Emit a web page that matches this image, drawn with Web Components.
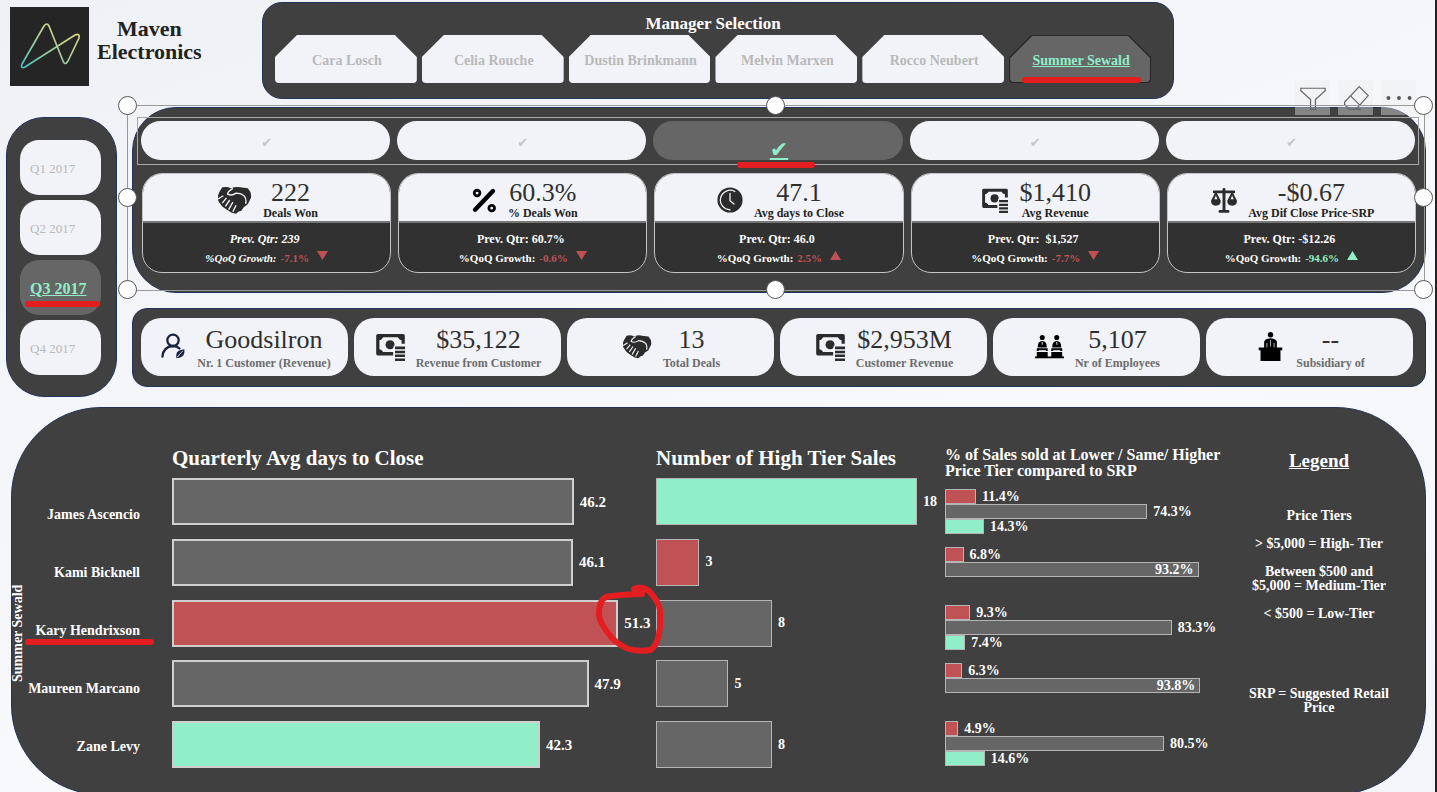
<!DOCTYPE html>
<html lang="en">
<head>
<meta charset="utf-8">
<meta name="viewport" content="width=device-width, initial-scale=1">
<title>Maven Electronics – Manager dashboard</title>
<style>
  :root {
    --page: #f1f3f8; --panel: #404040; --edge: #25325c; --dark: #313131; --grey: #666666;
    --mint: #90eec8; --rose: #c05256; --pen: #e41e20; --mute: #b9b9b9;
  }
  * { box-sizing: border-box; }
  html { scrollbar-width: none; background: var(--page); }
  body {
    margin: 0; min-height: 100vh; border-right: 2px solid #222;
    background: linear-gradient(160deg, #eff1f6, #f8f9fc 60%, #f4f5fb);
    font-family: Georgia, "Liberation Serif", serif; font-size: 14px; line-height: 18px; color: #252525;
  }
  .top { display: grid; grid-template-columns: 262px 1fr 261px; height: 107px; padding-top: 2px; align-items: start; }
  .mid { display: grid; grid-template-columns: 111px 1fr; gap: 15px; padding: 0 9px 10px 6px; }
  .mid > quarter-slicer { margin-top: 10px; }
  .stack { display: grid; gap: 15px; align-content: start; }
</style>
</head>
<body>
  <header class="top">
    <brand-mark>Maven<br>Electronics</brand-mark>
    <manager-tabs active="Summer Sewald">Manager Selection</manager-tabs>
  </header>
  <main>
    <div class="mid">
      <quarter-slicer active="Q3 2017"></quarter-slicer>
      <div class="stack">
        <kpi-panel>
          <kpi-card icon="hands" value="222" prev="239" growth="-7.1%" trend="down" slanted>Deals Won</kpi-card>
          <kpi-card icon="percent" value="60.3%" prev="60.7%" growth="-0.6%" trend="down">% Deals Won</kpi-card>
          <kpi-card icon="clock" value="47.1" prev="46.0" growth="2.5%" trend="up">Avg days to Close</kpi-card>
          <kpi-card icon="money" value="$1,410" prev="&nbsp;$1,527" growth="-7.7%" trend="down">Avg Revenue</kpi-card>
          <kpi-card icon="scales" value="-$0.67" prev="-$12.26" growth="-94.6%" trend="up" good>Avg Dif Close Price-SRP</kpi-card>
        </kpi-panel>
        <customer-panel>
          <customer-card icon="person" value="Goodsilron">Nr. 1 Customer (Revenue)</customer-card>
          <customer-card icon="money" value="$35,122">Revenue from Customer</customer-card>
          <customer-card icon="hands" value="13">Total Deals</customer-card>
          <customer-card icon="money" value="$2,953M">Customer Revenue</customer-card>
          <customer-card icon="staff" value="5,107">Nr of Employees</customer-card>
          <customer-card icon="podium" value="--">Subsidiary of</customer-card>
        </customer-panel>
      </div>
    </div>
    <team-panel>
      <agent-names slot="names" manager="Summer Sewald" marked="Kary Hendrixson"></agent-names>
      <bar-chart slot="days" id="days">Quarterly Avg days to Close</bar-chart>
      <bar-chart slot="sales" id="sales">Number of High Tier Sales</bar-chart>
      <tier-chart slot="tiers">% of Sales sold at Lower / Same/ Higher<br>Price Tier compared to SRP</tier-chart>
      <tier-legend slot="legend"></tier-legend>
    </team-panel>
  </main>

<script>
const base = `
  *, *::before, *::after { box-sizing: border-box; }
  :host { display: block; }
  button { font: inherit; color: inherit; margin: 0; padding: 0; border: 0; background: none; cursor: pointer; position: relative; }
  .pen { position: absolute; height: 6px; border-radius: 3px; background: var(--pen); }
`;

function define(name, render) {
  customElements.define(name, class extends HTMLElement {
    constructor() { super(); this.attachShadow({ mode: 'open' }); }
    connectedCallback() {
      const t = document.createElement('template');
      t.innerHTML = render(this);
      this.shadowRoot.replaceChildren(t.content.cloneNode(true));
    }
  });
}
const get = (el, n) => el.getAttribute(n) || '';

/* ---------- icons ---------- */
const icons = {
  hands: `<path fill="#2b2b2b" d="M1 9 4 4q5-1 8 1 5-2 9-1l7 1q4 4 3 9l-3 6-4 3-2 3-3 1-2 2-4-1-5-3-4-3-3-4-2-4Q0 12 1 9z"/>
    <path fill="none" stroke="#f1f3f8" stroke-width="1.300" d="M14 5Q9 8 9 10.500q4 2 8-1 5 0 8 3 2 3 1 7M0 15l5-3M8 14l-4 5M11 16l-4 6M14 18l-4 7M17 21l-3 6"/>`,
  percent: `<g fill="none" stroke="#000"><path stroke-width="5.500" stroke-linecap="round" d="M27 5 5 28"/><circle cx="7.500" cy="7.500" r="3.500" stroke-width="3.400"/><circle cx="25.500" cy="26" r="3.500" stroke-width="3.400"/></g>`,
  clock: `<circle cx="16" cy="16" r="15.500" fill="#2b2b2b"/><path fill="none" stroke="#f1f3f8" stroke-width="1.600" stroke-linecap="round" d="M22 5.500A12 12 0 1 0 16 28M16 8v9l5 4"/>`,
  money: `<path fill="none" stroke="#2b2b2b" stroke-width="3.600" stroke-linejoin="round" d="M19 24H2V4h28v9"/>
    <path fill="#2b2b2b" d="M3 5h5q-1 4-5 4zM29 5h-5q1 4 5 4zM3 23h5q-1-4-5-4z"/><circle cx="15.500" cy="14" r="5" fill="#2b2b2b"/>
    <path fill="#f1f3f8" d="M19.500 15h12.500V32H19.500z"/><path stroke="#2b2b2b" stroke-width="2.800" d="M21 17.500h11M21 22h11M21 26.300h11M21 30.600h11"/>`,
  scales: `<path fill="none" stroke="#2b2b2b" stroke-width="3.600" stroke-linecap="round" d="M16 3v26M4 6h24M11 30h10"/>
    <path fill="#2b2b2b" d="M5.500 6h1L12 17q0 6-6 6t-6-6zM25.500 6h1L32 17q0 6-6 6t-6-6z"/>
    <path fill="#f1f3f8" d="M6 10.500l2 4.500h-4zM26 10.500l2 4.500h-4z"/>`,
  person: `<g fill="none" stroke="#1b2340" stroke-width="2.800"><circle cx="16" cy="9" r="7"/><path stroke-linecap="round" d="M3 29q1-12 13-13 5 0 8 3"/></g>
    <path fill="#1b2340" d="M20 27q0-6 10-7 1 8-5 10l-5 1z"/><path stroke="#f1f3f8" d="m21 30 7-8"/>`,
  staff: `<g><circle cx="8" cy="6" r="2.800"/><path d="M3 17q0-7 5-7t5 7zM2 18h12v3H2zM2 22h12v6H2z"/></g>
    <g transform="translate(16)"><circle cx="8" cy="6" r="2.800"/><path d="M3 17q0-7 5-7t5 7zM2 18h12v3H2zM2 22h12v6H2z"/></g><path d="M0 27h32v2H0z"/>
    <path stroke="#f1f3f8" stroke-width="1" d="M4 20.500h8M20 20.500h8M8 11v3M24 11v3"/>`,
  podium: `<circle cx="16" cy="3" r="3"/><path d="M9 17V11q0-3 7-4 7 1 7 4v6zM3 17h26v3H3zM5 20h22v12H5z"/><path stroke="#f1f3f8" stroke-width=".8" d="M16 9v7M12 12v5M20 12v5"/>`,
  funnel: `<path fill="none" stroke="#666" stroke-width="1.500" d="M1 4h30v3L19 18v12h-6V18L1 7z"/>`,
  eraser: `<path fill="none" stroke="#666" stroke-width="1.500" d="M20 2 31 13 16 30H8l-6-6V21zM9 13 21 25M8 30h14"/>`,
  dots: `<g fill="#555"><circle cx="3" cy="16" r="2.400"/><circle cx="16" cy="16" r="2.400"/><circle cx="29" cy="16" r="2.400"/></g>`
};
define('ui-icon', el => `<style>${base} :host { width: var(--size, 26px); height: var(--size, 26px); flex: none; } svg { display: block; width: 100%; height: 100%; }</style>
  <svg viewBox="0 0 32 32" aria-hidden="true">${icons[get(el, 'name')]}</svg>`);

/* ---------- header ---------- */
define('brand-mark', () => `<style>${base}
  :host { display: flex; gap: 8px; padding: 5px 0 0 10px; }
  svg { width: 79px; height: 79px; flex: none; }
  h1 { margin: 10px 0 0; font-size: 22px; line-height: 23px; text-align: center; color: #222; }
  </style>
  <svg viewBox="0 0 79 79" role="img" aria-label="Maven logo"><defs><linearGradient id="g" x1="0" y1="1" x2="1" y2="0"><stop stop-color="#45c3bd"/><stop offset=".6" stop-color="#b9cf93"/><stop offset="1" stop-color="#ecdf83"/></linearGradient></defs>
  <rect width="79" height="79" fill="#252525"/><path fill="none" stroke="url(#g)" stroke-width="1.700" stroke-linejoin="round" d="M12 57 34 19Q37 15 39 19L53 54Q55 59 58 54L69 31Q70 26 65 28L15 60Q10 62 12 57Z"/></svg>
  <h1><slot></slot></h1>`);

const managers = ['Cara Losch', 'Celia Rouche', 'Dustin Brinkmann', 'Melvin Marxen', 'Rocco Neubert', 'Summer Sewald'];
define('manager-tabs', el => `<style>${base}
  :host { height: 97px; padding: 12px 22px 0 12px; border: 1px solid var(--edge); border-radius: 20px; background: var(--panel); color: #fff; }
  h2 { margin: 0 0 2px; font-size: 17px; line-height: 18px; text-align: center; }
  nav { display: grid; grid-template-columns: repeat(6, 1fr); gap: 5px; }
  button { height: 48px; padding: 4px 0 0 2px; font-weight: bold; color: var(--mute); isolation: isolate; white-space: nowrap; }
  button::before, button.on::after { content: ""; position: absolute; inset: 0; z-index: -1; background: var(--page); border-radius: 0 0 4px 4px;
    clip-path: polygon(22px 0, calc(100% - 22px) 0, 100% 22px, 100% 100%, 0 100%, 0 22px); }
  button.on { color: var(--mint); text-decoration: underline; }
  button.on::before { background: #262626; }
  button.on::after { inset: 1px; background: var(--grey); }
  .pen { left: 13px; right: 10px; bottom: 0; }
  </style><h2><slot></slot></h2>
  <nav>${managers.map(m => m === get(el, 'active') ? `<button class="on" aria-pressed="true">${m}<span class="pen"></span></button>` : `<button>${m}</button>`).join('')}</nav>`);

/* ---------- quarter slicer ---------- */
define('quarter-slicer', el => `<style>${base}
  :host { height: 280px; padding: 22px 15px 0 13px; border: 1px solid var(--edge); border-radius: 38px; background: var(--panel); }
  nav { display: grid; gap: 5px; }
  button { height: 55px; padding: 2px 0 0 10px; border-radius: 19px; background: var(--page); color: var(--mute); font-size: 13px; text-align: left; }
  .on { background: var(--grey); color: var(--mint); font-size: 16px; font-weight: bold; text-decoration: underline; }
  .pen { left: 5px; right: 1px; bottom: 8px; }
  </style><nav>${['Q1 2017', 'Q2 2017', 'Q3 2017', 'Q4 2017'].map(q => q === get(el, 'active') ? `<button class="on" aria-pressed="true">${q}<span class="pen"></span></button>` : `<button>${q}</button>`).join('')}</nav>`);

/* ---------- KPI panel ---------- */
define('kpi-panel', () => `<style>${base}
  :host { position: relative; padding: 13px 10px 19px 8px; border: 1px solid var(--edge); border-radius: 44px; background: var(--panel); }
  .checks, .cards { display: grid; grid-template-columns: repeat(5, 1fr); gap: 7px; }
  .checks { position: relative; margin-bottom: 13px; }
  .outline { position: absolute; inset: -4px -4px -5px -4px; border: 1px solid #a8a8a8; pointer-events: none; }
  .checks button { height: 39px; border-radius: 20px; background: var(--page); color: #c8c8c8; font: 13px/20px "DejaVu Sans", sans-serif; padding: 4px 0 0 2px; }
  .checks .on { background: var(--grey); color: var(--mint); font-size: 22px; padding-top: 18px; text-decoration: underline; text-underline-offset: 1px; }
  .pen { left: 50%; width: 78px; margin-left: -41px; bottom: -8px; z-index: 1; }
  .cards { margin: 0 -1px 0 1px; }
  .frame { position: absolute; inset: -3px 0 1px -6px; border: 1px solid #999; pointer-events: none; }
  .frame i { position: absolute; width: 19px; height: 19px; margin: -10px; border: 1px solid #555; border-radius: 50%; background: #fff; }
  .tools { position: absolute; top: -28px; right: 9px; display: flex; gap: 8px; }
  .tools button { display: grid; place-items: center; width: 35px; height: 35px; background: rgba(238, 238, 238, .4); }
  </style>
  <div class="checks"><span class="outline"></span>
    <button aria-label="Deals Won">✔</button><button aria-label="% Deals Won">✔</button>
    <button class="on" aria-pressed="true" aria-label="Avg days to Close">✔<span class="pen"></span></button>
    <button aria-label="Avg Revenue">✔</button><button aria-label="Avg Dif Close Price-SRP">✔</button></div>
  <div class="cards"><slot></slot></div>
  <div class="tools"><button aria-label="Filters"><ui-icon name="funnel"></ui-icon></button><button aria-label="Clear selections"><ui-icon name="eraser"></ui-icon></button><button aria-label="More options"><ui-icon name="dots"></ui-icon></button></div>
  <div class="frame">${[[0,0],[50,0],[100,0],[0,50],[100,50],[0,100],[50,100],[100,100]].map(([x, y]) => `<i style="left:${x}%;top:${y}%"></i>`).join('')}</div>`);

const metric = `
  .head { display: flex; justify-content: center; align-items: center; gap: 11px; }
  .text { text-align: center; white-space: nowrap; }
  .value { font-size: 26px; line-height: 26px; color: #2f2f2f; }
  .label { font-size: 12px; line-height: 14px; font-weight: bold; }
`;
define('kpi-card', el => `<style>${base}${metric}
  :host { height: 100px; border: 1px solid #c4c4c4; border-radius: 20px; overflow: hidden; background: var(--dark); color: #fff; text-align: center; font-weight: bold; }
  .head { height: 49px; padding: 4px 0 0 3px; border-bottom: 2px solid #777; background: var(--page); color: #222; }
  .value { font-weight: normal; }
  :host([icon="hands"]) ui-icon { --size: 34px; }
  p { margin: 0; font-size: 12px; line-height: 18px; }
  .prev { padding: 7px 4px 0 0; }
  .growth { display: flex; justify-content: center; gap: 4px; font-size: 11px; line-height: 20px; }
  :host([slanted]) .prev, :host([slanted]) .growth > span:first-child { font-style: italic; }
  .delta { color: ${el.hasAttribute('good') ? 'var(--mint)' : 'var(--rose)'}; }
  svg { width: 11px; height: 9px; margin: 3px 0 0 4px; fill: ${el.hasAttribute('good') ? 'var(--mint)' : 'var(--rose)'}; }
  </style>
  <div class="head"><ui-icon name="${get(el, 'icon')}"></ui-icon><div class="text"><div class="value">${get(el, 'value')}</div><div class="label"><slot></slot></div></div></div>
  <p class="prev">Prev. Qtr: ${get(el, 'prev')}</p>
  <p class="growth"><span>%QoQ Growth:</span><span class="delta">${get(el, 'growth')}</span>
  <svg viewBox="0 0 11 9" aria-hidden="true"><path d="${get(el, 'trend') === 'up' ? 'M0 9 5.500 0 11 9z' : 'M0 0h11L5.500 9z'}"/></svg></p>`);

/* ---------- customer row ---------- */
define('customer-panel', () => `<style>${base}
  :host { display: grid; grid-template-columns: repeat(6, 1fr); gap: 6px; height: 79px; padding: 9px 12px 10px 8px; border: 1px solid var(--edge); border-radius: 15px; background: var(--panel); }
  </style><slot></slot>`);
define('customer-card', el => `<style>${base}${metric}
  :host { display: grid; align-content: center; height: 58px; padding: 2px 0 0 2px; border-radius: 20px; background: var(--page); }
  ui-icon { --size: 29px; margin-top: -4px; }
  :host([icon="person"]) ui-icon { --size: 26px; }
  .label { color: #6c6c6c; margin-top: 3px; }
  </style><div class="head"><ui-icon name="${get(el, 'icon')}"></ui-icon><div class="text"><div class="value">${get(el, 'value')}</div><div class="label"><slot></slot></div></div></div>`);

/* ---------- team panel ---------- */
const agents = [
  { name: 'James Ascencio', days: [46.2, 'grey'], sales: [18, 'mint'], tiers: [11.4, 74.3, 14.3] },
  { name: 'Kami Bicknell', days: [46.1, 'grey'], sales: [3, 'rose'], tiers: [6.8, 93.2] },
  { name: 'Kary Hendrixson', days: [51.3, 'rose'], sales: [8, 'grey'], tiers: [9.3, 83.3, 7.4] },
  { name: 'Maureen Marcano', days: [47.9, 'grey'], sales: [5, 'grey'], tiers: [6.3, 93.8] },
  { name: 'Zane Levy', days: [42.3, 'mint'], sales: [8, 'grey'], tiers: [4.9, 80.5, 14.6] }
];
define('team-panel', () => `<style>${base}
  :host { display: grid; grid-template-columns: 160px 484fr 289fr 298fr 152px; align-items: start; height: 388px; margin: 0 9px 0 11px; padding: 36px 30px 0 0;
    border: 1px solid var(--edge); border-radius: 90px; background: var(--panel); color: #fff; font-weight: bold; }
  </style><slot name="names"></slot><slot name="days"></slot><slot name="sales"></slot><slot name="tiers"></slot><slot name="legend"></slot>`);

define('agent-names', el => `<style>${base}
  :host { display: flex; justify-content: space-between; padding-right: 32px; white-space: nowrap; }
  .manager { writing-mode: vertical-rl; transform: rotate(180deg); line-height: 12px; width: 12px; height: 101px; margin-top: 137px; }
  ul { list-style: none; margin: 62px 0 0; padding: 0; display: grid; gap: 40px; text-align: right; justify-items: end; }
  li { position: relative; }
  .pen { left: -10px; right: -14px; bottom: -5px; }
  </style><div class="manager">${get(el, 'manager')}</div>
  <ul>${agents.map(a => `<li>${a.name}${a.name === get(el, 'marked') ? '<span class="pen"></span>' : ''}</li>`).join('')}</ul>`);

define('bar-chart', el => {
  const days = el.id === 'days', unit = days ? 1.797 : 5.017;
  return `<style>${base}
  :host { position: relative; z-index: ${days ? 1 : 0}; white-space: nowrap; }
  h3 { margin: 0 0 6px; font-size: 21px; line-height: 28px; }
  .plot { display: flex; flex-direction: column; justify-content: space-between; height: 290px; }
  .row { display: flex; align-items: center; gap: 6px; font-size: ${days ? 15 : 14}px; line-height: 20px; }
  .bar { height: 47px; border: ${days ? '2px solid #cfcfcf' : '1px solid #b5b5b5'}; }
  .grey { background: var(--grey); } .mint { background: var(--mint); } .rose { background: var(--rose); }
  .num { position: relative; }
  svg { position: absolute; left: -32px; top: -33px; width: 76px; height: 76px; fill: none; stroke: var(--pen); stroke-width: 6; stroke-linecap: round; pointer-events: none; }
  </style><h3><slot></slot></h3>
  <div class="plot">${agents.map(a => { const [v, c] = a[el.id]; return `<div class="row"><span class="bar ${c}" style="width:${v * unit}%"></span><span class="num">${days ? v.toFixed(1) : v}${v === 51.3 ? '<svg viewBox="0 0 76 76" aria-hidden="true"><path d="M42 9Q50 6 57 11 67 22 68 30L68 47Q66 66 58 70 47 72 37 69 28 66 20 58 8 44 7 35 7 20 14 17 21 15 50 14"/></svg>' : ''}</span></div>`; }).join('')}</div>`;
});

define('tier-chart', () => `<style>${base}
  :host { white-space: nowrap; }
  h3 { margin: 3px 0 10px; font-size: 16px; line-height: 16px; }
  .plot { display: grid; gap: 13px; }
  .group { height: 45px; }
  .row { display: flex; align-items: center; gap: 6px; height: 15px; line-height: 15px; }
  .bar { height: 15px; line-height: 13px; border: 1px solid #b5b5b5; text-align: right; padding-right: 4px; }
  .c0 { background: var(--rose); } .c1 { background: var(--grey); } .c2 { background: var(--mint); }
  </style><h3><slot></slot></h3>
  <div class="plot">${agents.map(a => `<div class="group">${a.tiers.map((v, i) => {
    const t = v.toFixed(1) + '%', inside = v > 90;
    return `<div class="row"><span class="bar c${i}" style="width:${v * 0.913}%">${inside ? t : ''}</span>${inside ? '' : `<span>${t}</span>`}</div>`;
  }).join('')}</div>`).join('')}</div>`);

define('tier-legend', () => `<style>${base}
  :host { text-align: center; white-space: nowrap; line-height: 14px; }
  h3 { margin: 6px 0 37px; font-size: 19px; line-height: 22px; text-decoration: underline; }
  p { margin: 0 0 14px; display: grid; justify-items: center; }
  .last { margin-top: 66px; }
  </style><h3>Legend</h3><p>Price Tiers</p><p>&gt; $5,000 = High- Tier</p><p><span>Between $500 and</span><span>$5,000 = Medium-Tier</span></p><p>&lt; $500 = Low-Tier</p>
  <p class="last"><span>SRP = Suggested Retail</span><span>Price</span></p>`);
</script>
</body>
</html>
